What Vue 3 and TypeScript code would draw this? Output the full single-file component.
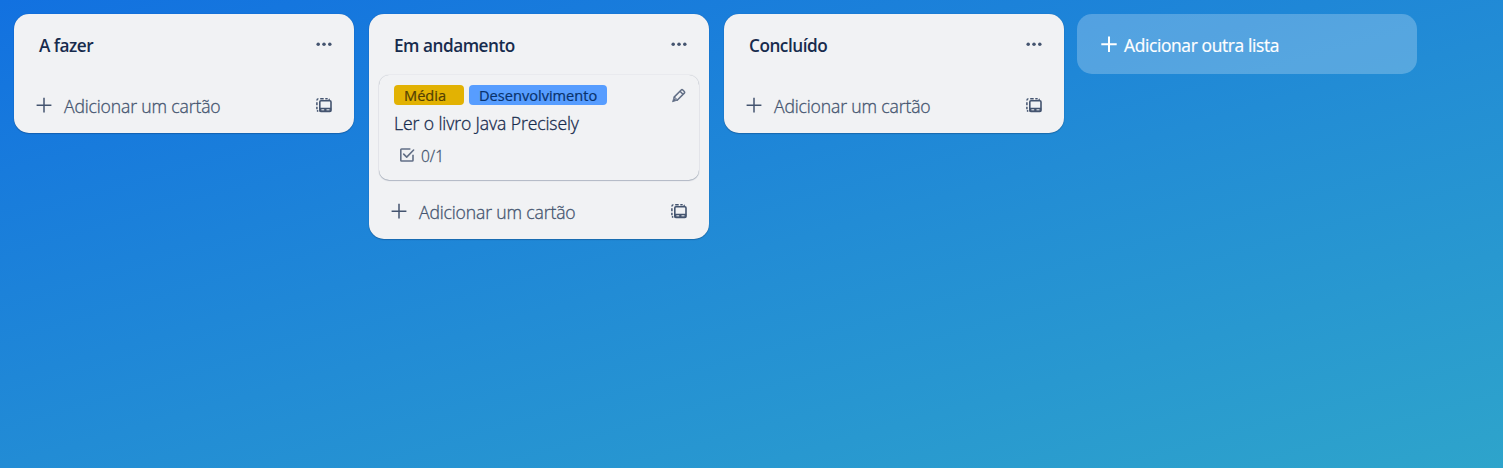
<script setup lang="ts">
interface Label {
  text: string
  tone: 'yellow' | 'blue'
}
interface Card {
  title: string
  labels: Label[]
  progress: string
}
interface List {
  title: string
  cards: Card[]
}

const lists: List[] = [
  { title: 'A fazer', cards: [] },
  {
    title: 'Em andamento',
    cards: [
      {
        title: 'Ler o livro Java Precisely',
        labels: [
          { text: 'Média', tone: 'yellow' },
          { text: 'Desenvolvimento', tone: 'blue' },
        ],
        progress: '0/1',
      },
    ],
  },
  { title: 'Concluído', cards: [] },
]
</script>

<template>
  <main class="board">
    <section v-for="list in lists" :key="list.title" class="list">
      <header class="list-header">
        <h2 class="list-title">{{ list.title }}</h2>
        <svg class="dots" width="16" height="6" viewBox="0 0 16 6" fill="#44546f">
          <circle cx="2.2" cy="3.2" r="1.75" />
          <circle cx="8" cy="3.2" r="1.75" />
          <circle cx="13.8" cy="3.2" r="1.75" />
        </svg>
      </header>

      <article v-for="card in list.cards" :key="card.title" class="card">
        <div class="labels">
          <span v-for="label in card.labels" :key="label.text" :class="['label', label.tone]">
            <span>{{ label.text }}</span>
          </span>
          <svg class="pencil" width="16" height="16" viewBox="0 0 16 16" fill="none" stroke="#626f86" stroke-width="1.5" stroke-linejoin="round">
            <path d="M3.1 9.1 10.2 2q.8-.8 1.6 0l1.5 1.5q.8.8 0 1.6L6.2 12.2Z" />
            <path d="M9 3.3l3 3" />
            <path d="M3.1 9.1 1.5 13.8 6.2 12.2Z" fill="#626f86" stroke-width=".8" />
            <path d="M3.7 10.2l1.5 1.5" stroke="#f1f2f4" stroke-width=".7" />
          </svg>
        </div>
        <p class="card-title">{{ card.title }}</p>
        <div class="badge">
          <svg width="16" height="16" viewBox="0 0 16 16" fill="none" stroke="#626f86" stroke-width="1.6">
            <path d="M11.4 2H2.6q-.8 0-.8.8v10.4q0 .8.8.8h10.6q.8 0 .8-.8V7.8" />
            <path d="M4.7 7.1 7.7 10.1 14.6 3" stroke-linecap="round" stroke-linejoin="round" />
          </svg>
          <span>{{ card.progress }}</span>
        </div>
      </article>

      <footer class="list-footer">
        <svg width="16" height="16" viewBox="0 0 16 16" stroke="#44546f" stroke-width="1.5">
          <path d="M8 .8v14.8M.6 8.2h14.8" />
        </svg>
        <span class="add-card">Adicionar um cartão</span>
        <svg class="template" width="16" height="15" viewBox="0 0 16 15" fill="none" stroke="#44546f">
          <path d="M.9 2.6Q.9.8 2.4.8M4.2.8h3.5M9.3.8h2.4M12.8.9l.8.9M.9 4.2v3.1M.9 8.8v2.5M1 12.4l1.2 1.1" stroke-width="1.5" />
          <rect x="3.8" y="2.8" width="11.2" height="10.6" rx="1.1" stroke-width="1.6" />
          <path d="M3.6 9.7h11.6v3.4q0 .9-.9.9H4.5q-.9 0-.9-.9z" fill="#44546f" stroke="none" />
          <path d="M5.4 11.8h2.8M10.5 11.8h3" stroke="#f1f2f4" stroke-width="1" />
        </svg>
      </footer>
    </section>

    <section class="new-list">
      <svg width="16" height="16" viewBox="0 0 16 16" stroke="#fff" stroke-width="2">
        <path d="M8 .5v15.4M.3 8.2h15.4" />
      </svg>
      <span>Adicionar outra lista</span>
    </section>
  </main>
</template>

<style>
body {
  margin: 0;
}
</style>

<style scoped>
.board {
  box-sizing: border-box;
  width: 100vw;
  height: 100vh;
  padding: 14px;
  display: flex;
  align-items: flex-start;
  gap: 15px;
  overflow: hidden;
  background: linear-gradient(164deg, #1271e0 0%, #228cd5 52%, #2ea4cb 100%);
  font-family: 'Open Sans', 'Noto Sans', sans-serif;
  color: #172b4d;
  white-space: nowrap;
}
.list {
  flex: 0 0 340px;
  box-sizing: border-box;
  border-radius: 15px;
  background: #f1f2f4;
  box-shadow: 0 1px 1px #091e4240, 0 0 1px #091e424f;
}
.list-header {
  height: 60px;
  padding: 0 22px 0 25px;
  display: flex;
  justify-content: space-between;
}
.list-title {
  margin: 20px 0 0;
  font-size: 17.2px;
  line-height: 23px;
  font-weight: 600;
  letter-spacing: -0.48px;
}
.dots {
  margin-top: 27px;
}
.card {
  box-sizing: border-box;
  height: 105px;
  margin: 1px 10px 0;
  padding: 10px 12px 0 15px;
  border-radius: 10px;
  box-shadow: 0 1px 1px #091e4240, 0 0 1px #091e424f;
}
.labels {
  display: flex;
  gap: 5px;
}
.label {
  box-sizing: border-box;
  height: 20px;
  padding: 0 10px;
  border-radius: 4px;
  font-size: 14.6px;
  line-height: 21px;
  font-weight: 500;
  -webkit-text-stroke: 0.2px currentColor;
}
.yellow {
  width: 70px;
  background: #e2b203;
  color: #533f04;
}
.blue {
  width: 138px;
  background: #579dff;
  color: #09326c;
}
.pencil {
  margin: 3px 0 0 auto;
}
.card-title {
  margin: 6px 0 0;
  font-size: 17.6px;
  line-height: 25px;
  font-weight: 300;
  letter-spacing: -0.1px;
  -webkit-text-stroke: 0.3px currentColor;
}
.badge {
  margin: 11px 0 0 5px;
  display: flex;
  gap: 6px;
  font-size: 15.5px;
  line-height: 18px;
  font-weight: 300;
  color: #44546f;
  -webkit-text-stroke: 0.3px currentColor;
}
.list-footer {
  height: 59px;
  padding: 0 22px;
  display: flex;
  align-items: flex-start;
  color: #44546f;
}
.list-footer > svg {
  margin-top: 23px;
}
.add-card {
  margin: 19px 0 0 12px;
  font-size: 17.6px;
  line-height: 26px;
  font-weight: 300;
  letter-spacing: -0.15px;
  -webkit-text-stroke: 0.3px currentColor;
}
.list-footer > .template {
  margin: 24px 0 0 auto;
}
.new-list {
  flex: 0 0 340px;
  box-sizing: border-box;
  height: 60px;
  margin-left: -2px;
  padding: 0 24px;
  display: flex;
  gap: 7px;
  border-radius: 15px;
  background: #ffffff3d;
  color: #fff;
  font-size: 17.4px;
  line-height: 24px;
  font-weight: 500;
  letter-spacing: -0.36px;
  -webkit-text-stroke: 0.2px currentColor;
}
.new-list svg {
  margin-top: 22px;
}
.new-list span {
  margin-top: 19px;
}
</style>
